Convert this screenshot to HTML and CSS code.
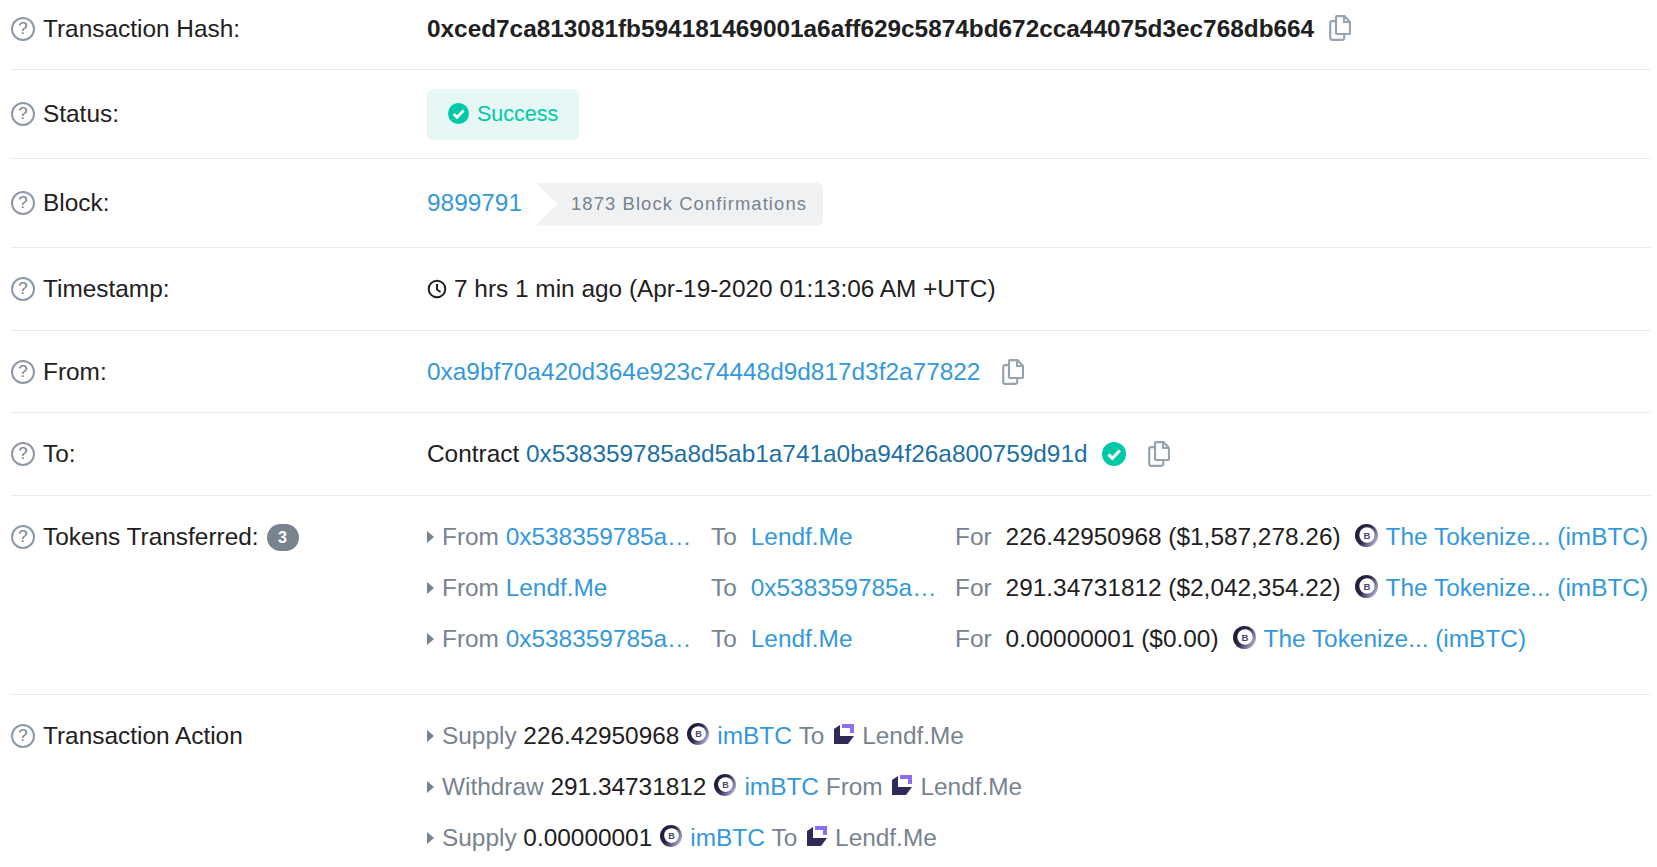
FILE: index.html
```html
<!DOCTYPE html>
<html lang="en">
<head>
<meta charset="utf-8">
<title>Transaction Details</title>
<link rel="stylesheet" href="styles.css">
</head>
<body>
<svg class="defs" width="0" height="0" aria-hidden="true">
  <defs>
    <linearGradient id="ring" x1="0" y1="0" x2="1" y2="0.6">
      <stop offset="0" stop-color="#15132e"/>
      <stop offset="0.55" stop-color="#2c2a4c"/>
      <stop offset="1" stop-color="#a9a6cf"/>
    </linearGradient>
    <symbol id="copy" viewBox="0 0 22 26">
      <rect x="1.200" y="6.200" width="14" height="18.600" rx="2" fill="#fff" stroke="#97a4af" stroke-width="2.200"/>
      <path d="M7 2.200a1 1 0 0 1 1-1h7.500L21 7v11a1 1 0 0 1-1 1H8a1 1 0 0 1-1-1z" fill="#fff" stroke="#97a4af" stroke-width="2.200"/>
      <path d="M15 1.500V7h5.500" fill="none" stroke="#97a4af" stroke-width="2"/>
    </symbol>
    <symbol id="check" viewBox="0 0 24 24">
      <circle cx="12" cy="12" r="12" fill="#00c9a7"/>
      <path d="M6.500 12.500l3.800 3.800 7.500-7.800" fill="none" stroke="#fff" stroke-width="3.200"/>
    </symbol>
    <symbol id="clock" viewBox="0 0 20 20">
      <circle cx="10" cy="10" r="8.300" fill="none" stroke="#1e2022" stroke-width="2"/>
      <path d="M10 5v5.500l3.500 2.500" fill="none" stroke="#1e2022" stroke-width="2"/>
    </symbol>
    <symbol id="lendf" viewBox="0 0 22 22">
      <path d="M1 6l6-4v11h14l-6 8H1z" fill="#2f2a56"/>
      <path d="M9 1h12v9h-4V5H9z" fill="#8f6df2"/>
    </symbol>
  </defs>
</svg>

<main class="details">
  <section class="row row-hash">
    <div class="label"><span class="help">?</span>Transaction Hash:</div>
    <div class="value">
      <span class="hash">0xced7ca813081fb594181469001a6aff629c5874bd672cca44075d3ec768db664</span>
      <svg class="copy copy-hash"><use href="#copy"/></svg>
    </div>
  </section>

  <section class="row row-status">
    <div class="label"><span class="help">?</span>Status:</div>
    <div class="value">
      <span class="status"><svg class="check check-small"><use href="#check"/></svg>Success</span>
    </div>
  </section>

  <section class="row row-block">
    <div class="label"><span class="help">?</span>Block:</div>
    <div class="value">
      <a class="link">9899791</a>
      <span class="confirm">1873 Block Confirmations</span>
    </div>
  </section>

  <section class="row row-time">
    <div class="label"><span class="help">?</span>Timestamp:</div>
    <div class="value">
      <svg class="clock"><use href="#clock"/></svg>
      <span class="time">7 hrs 1 min ago (Apr-19-2020 01:13:06 AM +UTC)</span>
    </div>
  </section>

  <section class="row row-from">
    <div class="label"><span class="help">?</span>From:</div>
    <div class="value">
      <a class="link">0xa9bf70a420d364e923c74448d9d817d3f2a77822</a>
      <svg class="copy copy-from"><use href="#copy"/></svg>
    </div>
  </section>

  <section class="row row-to">
    <div class="label"><span class="help">?</span>To:</div>
    <div class="value">
      <span>Contract&nbsp;<a class="link-dark">0x538359785a8d5ab1a741a0ba94f26a800759d91d</a></span>
      <svg class="check check-large"><use href="#check"/></svg>
      <svg class="copy copy-to"><use href="#copy"/></svg>
    </div>
  </section>

  <section class="row row-tokens">
    <div class="label"><span class="help">?</span>Tokens Transferred:<span class="count">3</span></div>
    <div class="stack">
      <div class="token">
        <span class="cell"><i class="caret"></i><span class="muted">From&nbsp;</span><a class="link">0x538359785a…</a></span>
        <span class="cell"><span class="muted to-word">To</span><a class="link">Lendf.Me</a></span>
        <span class="cell"><span class="muted for-word">For</span><span class="amount">226.42950968 ($1,587,278.26)</span><svg class="btc" viewBox="0 0 24 24"><circle cx="12" cy="12" r="12" fill="url(#ring)"/><circle cx="12.500" cy="11.500" r="8" fill="#fff"/><text x="12.500" y="15.500" class="btc-text">B</text></svg><a class="link">The Tokenize... (imBTC)</a></span>
      </div>
      <div class="token">
        <span class="cell"><i class="caret"></i><span class="muted">From&nbsp;</span><a class="link">Lendf.Me</a></span>
        <span class="cell"><span class="muted to-word">To</span><a class="link">0x538359785a…</a></span>
        <span class="cell"><span class="muted for-word">For</span><span class="amount">291.34731812 ($2,042,354.22)</span><svg class="btc" viewBox="0 0 24 24"><circle cx="12" cy="12" r="12" fill="url(#ring)"/><circle cx="12.500" cy="11.500" r="8" fill="#fff"/><text x="12.500" y="15.500" class="btc-text">B</text></svg><a class="link">The Tokenize... (imBTC)</a></span>
      </div>
      <div class="token">
        <span class="cell"><i class="caret"></i><span class="muted">From&nbsp;</span><a class="link">0x538359785a…</a></span>
        <span class="cell"><span class="muted to-word">To</span><a class="link">Lendf.Me</a></span>
        <span class="cell"><span class="muted for-word">For</span><span class="amount">0.00000001 ($0.00)</span><svg class="btc" viewBox="0 0 24 24"><circle cx="12" cy="12" r="12" fill="url(#ring)"/><circle cx="12.500" cy="11.500" r="8" fill="#fff"/><text x="12.500" y="15.500" class="btc-text">B</text></svg><a class="link">The Tokenize... (imBTC)</a></span>
      </div>
    </div>
  </section>

  <section class="row row-action">
    <div class="label"><span class="help">?</span>Transaction Action</div>
    <div class="stack">
      <div class="action"><i class="caret"></i><span class="muted">Supply&nbsp;</span><span>226.42950968</span><svg class="btc" viewBox="0 0 24 24"><circle cx="12" cy="12" r="12" fill="url(#ring)"/><circle cx="12.500" cy="11.500" r="8" fill="#fff"/><text x="12.500" y="15.500" class="btc-text">B</text></svg><a class="link">imBTC</a><span class="muted">&nbsp;To&nbsp;</span><svg class="lendf"><use href="#lendf"/></svg><span class="muted">Lendf.Me</span></div>
      <div class="action"><i class="caret"></i><span class="muted">Withdraw&nbsp;</span><span>291.34731812</span><svg class="btc" viewBox="0 0 24 24"><circle cx="12" cy="12" r="12" fill="url(#ring)"/><circle cx="12.500" cy="11.500" r="8" fill="#fff"/><text x="12.500" y="15.500" class="btc-text">B</text></svg><a class="link">imBTC</a><span class="muted">&nbsp;From&nbsp;</span><svg class="lendf"><use href="#lendf"/></svg><span class="muted">Lendf.Me</span></div>
      <div class="action"><i class="caret"></i><span class="muted">Supply&nbsp;</span><span>0.00000001</span><svg class="btc" viewBox="0 0 24 24"><circle cx="12" cy="12" r="12" fill="url(#ring)"/><circle cx="12.500" cy="11.500" r="8" fill="#fff"/><text x="12.500" y="15.500" class="btc-text">B</text></svg><a class="link">imBTC</a><span class="muted">&nbsp;To&nbsp;</span><svg class="lendf"><use href="#lendf"/></svg><span class="muted">Lendf.Me</span></div>
    </div>
  </section>
</main>
</body>
</html>
```

FILE: styles.css
```css
* { box-sizing: border-box; }
html, body { margin: 0; background: #fff; }
body {
  height: 867px;
  overflow: hidden;
  padding: 0 6px 0 11px;
  font-family: "Liberation Sans", Arial, sans-serif;
  font-size: 24.4px;
  line-height: 34px;
  color: #1e2022;
}
.defs { position: absolute; }
.details { display: block; }
.row {
  display: grid;
  grid-template-columns: 416px 1fr;
  border-bottom: 1px solid #e7eaf3;
}
.row-hash { padding: 12px 0 23px; }
.row-status { padding: 19px 0 18px; align-items: center; }
.row-block { padding: 27px 0 27px; }
.row-time { padding: 24px 0 24px; }
.row-from { padding: 24px 0 23px; }
.row-to { padding: 24px 0 24px; }
.row-tokens { padding: 24px 0 38px; }
.row-action { padding: 24px 0 0; border-bottom: 0; }
.label { display: flex; align-items: center; height: 34px; white-space: nowrap; }
.row-status .label { padding-bottom: 2px; }
.help {
  flex: none;
  width: 24px;
  height: 24px;
  margin-right: 8px;
  border: 2px solid #8d99a8;
  border-radius: 50%;
  color: #77838f;
  font-size: 17px;
  line-height: 20px;
  text-align: center;
}
.count {
  margin-left: 8px;
  width: 32px;
  height: 27px;
  border-radius: 14px;
  background: #77838f;
  color: #fff;
  font-size: 16px;
  font-weight: 700;
  line-height: 27px;
  text-align: center;
}
.value { display: flex; align-items: center; height: 34px; white-space: nowrap; min-width: 0; }
.row-status .value { height: 51px; }
.hash { font-weight: 700; font-size: 24.36px; }
.link { color: #3498db; }
.link-dark { color: #1d6fa5; }
.copy { flex: none; width: 22px; height: 26px; }
.copy-hash { margin-left: 15px; margin-top: -3px; }
.copy-from { margin-left: 22px; }
.copy-to { margin-left: 22px; }
.status {
  display: inline-flex;
  align-items: center;
  height: 51px;
  padding: 0 21px 2px;
  border-radius: 6px;
  background: #e6f8f5;
  color: #00c9a7;
  font-size: 21.5px;
}
.check { flex: none; }
.check-small { width: 21px; height: 21px; margin-right: 8px; }
.check-large { width: 24px; height: 24px; margin-left: 14px; }
.confirm {
  display: flex;
  align-items: center;
  height: 43px;
  margin-left: 14px;
  margin-top: 2px;
  padding: 0 16px 0 35px;
  border-radius: 0 6px 6px 0;
  background: #eff1f3;
  color: #77838f;
  font-size: 18.4px;
  letter-spacing: 0.06em;
  clip-path: polygon(0 0, 100% 0, 100% 100%, 0 100%, 22px 50%);
}
.clock { flex: none; width: 20px; height: 20px; margin-right: 7px; }
.stack { display: flex; flex-direction: column; gap: 17px; min-width: 0; }
.token { display: grid; grid-template-columns: 284px 244px auto; white-space: nowrap; }
.cell { display: flex; align-items: center; min-width: 0; }
.muted { color: #77838f; }
.caret {
  flex: none;
  width: 0;
  height: 0;
  margin-right: 8px;
  border-style: solid;
  border-width: 6px 0 6px 7px;
  border-color: transparent transparent transparent #77838f;
}
.to-word { margin-right: 14px; }
.for-word { margin-right: 14px; }
.amount { margin-right: 14px; }
.btc { flex: none; width: 23px; height: 23px; margin: -4px 8px 0 0; }
.btc-text { font-size: 10px; font-weight: 700; text-anchor: middle; fill: #4a4870; }
.action { display: flex; align-items: center; white-space: nowrap; }
.action .btc { width: 22px; height: 22px; margin-left: 8px; margin-right: 8px; }
.lendf { flex: none; width: 22px; height: 22px; margin: -5px 7px 0 2px; }
```
